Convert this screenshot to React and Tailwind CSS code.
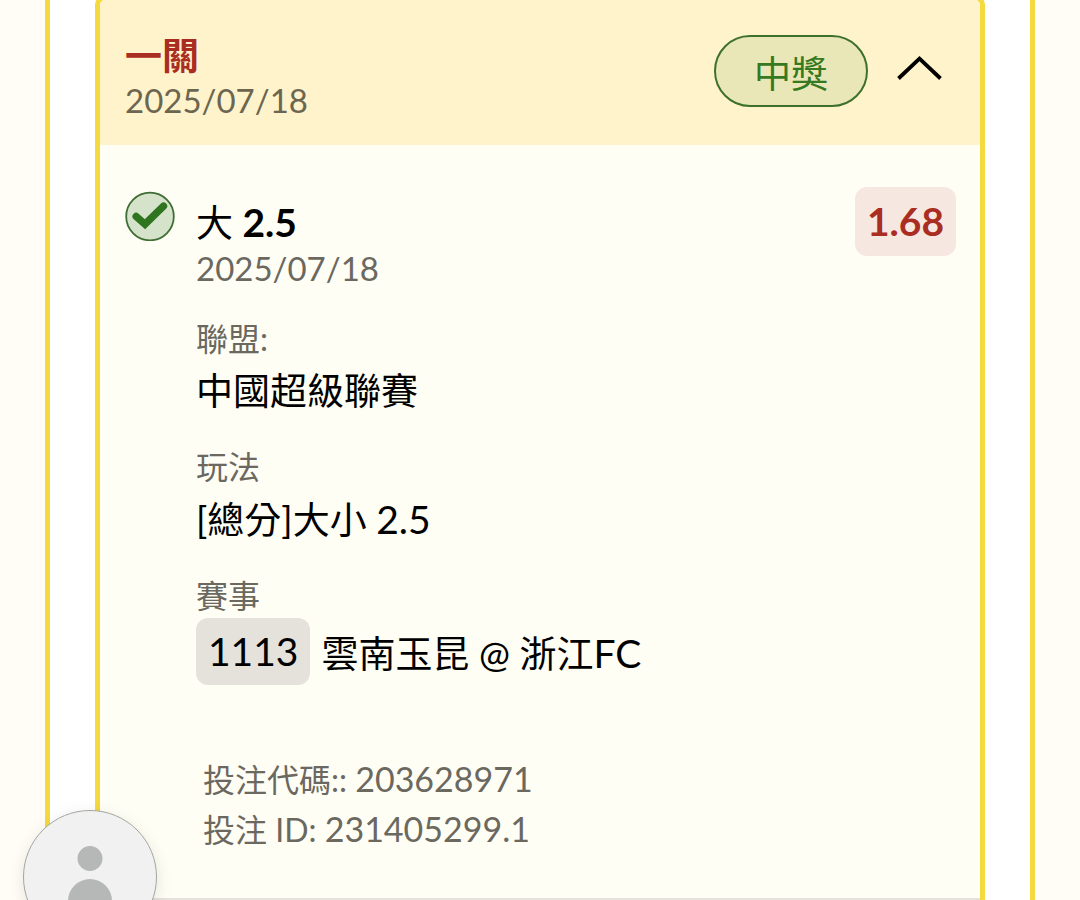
import React from "react";

function Detail({ label, children }) {
  return (
    <div className="flex flex-col gap-[2px]">
      <dt className="text-[32px] leading-[40px] text-[#6b6860]">{label}</dt>
      <dd className="text-[37px] leading-[60px] text-black">{children}</dd>
    </div>
  );
}

function CheckBadge() {
  return (
    <svg viewBox="0 0 50 50" className="mt-[46px] h-[50px] w-[50px] shrink-0" role="img" aria-label="中獎">
      <circle cx="25" cy="25.5" r="23.8" fill="#d5e3cb" stroke="#3f6e35" strokeWidth="1.8" />
      <path d="M11.2 25.5 L20 33.2 L38.5 15.2" fill="none" stroke="#2f751f" strokeWidth="7.4" strokeLinecap="round" />
    </svg>
  );
}

function SlipHeader() {
  return (
    <header className="flex h-[145px] items-start justify-between bg-[#fff3cc] pl-[25px] pr-[38px]">
      <div className="pt-[32px]">
        <h1 className="text-[37px] font-bold leading-[48px] text-[#aa2d22]">一關</h1>
        <time className="block text-[33px] leading-[40px] text-[#6c6650]">2025/07/18</time>
      </div>
      <div className="flex items-center pt-[35px]">
        <span className="flex h-[72px] items-center rounded-full border-2 border-[#3d702b] bg-[#e9e7b8] px-[38px] pt-[6px] text-[37px] leading-[64px] text-[#36791f]">
          中獎
        </span>
        <button type="button" aria-label="收合" aria-expanded="true" className="ml-[28px] -mt-[6px]">
          <svg viewBox="0 0 46 28" className="h-[28px] w-[46px]">
            <path d="M2.5 24.5 L23.5 4.5 L44.5 24.5" fill="none" stroke="#000" strokeWidth="3.8" />
          </svg>
        </button>
      </div>
    </header>
  );
}

export default function App() {
  return (
    <div
      lang="zh-Hant"
      className="h-screen overflow-hidden bg-[#fffdf5] px-[45px] font-['Lato','Noto_Sans_CJK_TC',sans-serif]"
    >
      <main className="min-h-full border-x-[5px] border-[#f4d93f] bg-white px-[45px]">
        <article className="-mt-[5px] overflow-hidden rounded-t-[10px] border-x-[5px] border-t-[5px] border-[#f4d93f] bg-[#fffef5]">
          <SlipHeader />
          <section className="flex h-[755px] items-start border-b-2 border-[#e5e2dc] pl-[25px] pr-[24px]">
            <CheckBadge />
            <div className="ml-[21px] grow">
              <h2 className="mt-[53px] text-[37px] leading-[48px] text-black">
                大 <b className="text-[39px] font-bold">2.5</b>
              </h2>
              <time className="block text-[33px] leading-[42px] text-[#6b6860]">2025/07/18</time>
              <dl className="mt-[30px] flex flex-col gap-[26px]">
                <Detail label="聯盟:">中國超級聯賽</Detail>
                <Detail label="玩法">
                  [總分]大小 <span className="text-[39px]">2.5</span>
                </Detail>
                <Detail label="賽事">
                  <span className="flex items-center gap-[11px]">
                    <span className="rounded-[12px] bg-[#e5e2dc] px-[12px] text-[39px] leading-[67px]">1113</span>
                    <span className="pt-[4px]">
                      雲南玉昆 @ 浙江<span className="text-[39px]">FC</span>
                    </span>
                  </span>
                </Detail>
              </dl>
              <div className="mt-[69px] pl-[7px] text-[32px] leading-[49px] text-[#6b6860]">
                <p>投注代碼:: <span className="text-[34px]">203628971</span></p>
                <p>投注 ID: <span className="text-[34px]">231405299.1</span></p>
              </div>
            </div>
            <output className="mt-[42px] rounded-[12px] bg-[#f7e7e1] px-[12px] text-[39px] font-bold leading-[69px] text-[#aa2d22]">
              1.68
            </output>
          </section>
        </article>
      </main>
      <button
        type="button"
        aria-label="個人帳戶"
        className="fixed -bottom-[44px] left-[23px] h-[134px] w-[134px] overflow-hidden rounded-full border border-[#a5a5a0] bg-[#f1f1f1] shadow-[0_4px_16px_rgba(0,0,0,0.1)]"
      >
        <svg viewBox="0 0 132 132" className="h-full w-full">
          <circle cx="66" cy="47.5" r="12.5" fill="#b6b8b7" />
          <path d="M44 96 V90 A22 22 0 0 1 88 90 V96 Z" fill="#b6b8b7" />
        </svg>
      </button>
    </div>
  );
}
